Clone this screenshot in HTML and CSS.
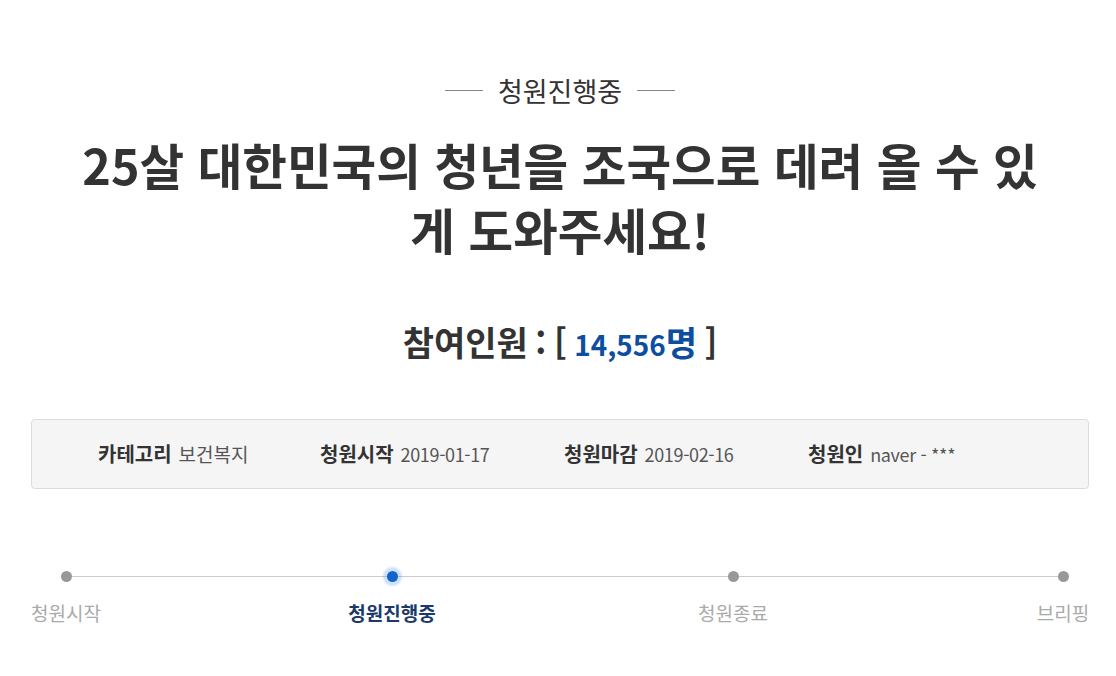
FILE: index.html
```html
<!DOCTYPE html>
<html lang="ko">
<head>
    <meta charset="UTF-8">
    <title>청원진행중</title>
    <link rel="stylesheet" href="styles.css">
</head>
<body>
<div class="wrap">
    <p class="state"><span>청원진행중</span></p>
    <h1 class="title">25살 대한민국의 청년을 조국으로 데려 올 수 있게 도와주세요!</h1>
    <p class="count">참여인원 : [ <span class="num"><em>14,556</em>명</span> ]</p>

    <ul class="info">
        <li><b>카테고리</b>보건복지</li>
        <li><b>청원시작</b><em>2019-01-17</em></li>
        <li><b>청원마감</b><em>2019-02-16</em></li>
        <li><b>청원인</b><em>naver - ***</em></li>
    </ul>

    <ol class="steps">
        <li class="first"><i></i>청원시작</li>
        <li class="gap"></li>
        <li class="on"><i></i>청원진행중</li>
        <li class="gap"></li>
        <li><i></i>청원종료</li>
        <li class="gap"></li>
        <li class="last"><i></i>브리핑</li>
    </ol>
</div>
</body>
</html>
```

FILE: styles.css
```css
*{
    margin: 0;
    padding: 0;
}
body{
    font-family: "Noto Sans CJK KR", "Noto Sans", sans-serif;
    color: #333;
    background: #fff;
}
em{
    font-style: normal;
}
.wrap{
    width: 1058px;
    margin-left: 31px;
    padding-top: 63px;
}
.state{
    text-align: center;
    font-size: 27px;
    line-height: 34px;
    color: #333;
}
.state span{
    display: inline-flex;
    align-items: center;
    gap: 15px;
}
.state span::before,
.state span::after{
    content: "";
    width: 38px;
    height: 1px;
    background: #888;
}
.title{
    width: 970px;
    margin: 24px auto 0;
    text-align: center;
    font-size: 48.5px;
    line-height: 65px;
    font-weight: bold;
    word-break: break-all;
    color: #333;
}
.count{
    margin-top: 60px;
    text-align: center;
    font-size: 34px;
    line-height: 40px;
    font-weight: bold;
    word-spacing: -2px;
    color: #333;
}
.count em{
    font-size: 0.82em;/*숫자는 조금 작게*/
}
.count .num{
    color: #0d4ea0;
}
.info{
    list-style: none;
    margin-top: 55px;
    height: 68px;
    border: 1px solid #dcdcdc;
    border-radius: 4px;
    background: #f5f5f5;
    display: grid;
    grid-template-columns: 222px 244px 244px auto;
    align-items: center;
    padding-left: 66px;
    font-size: 19px;
    color: #555;
}
.info em{
    font-size: 18px;
    letter-spacing: -0.02em;
}
.info b{
    color: #333;
    font-size: 20px;
    margin-right: 7px;
}
.steps{
    list-style: none;
    margin-top: 82px;
    display: grid;
    grid-template-columns: 70px 241px 100px 241px 100px 254px 52px;
    position: relative;
    font-size: 19px;
    color: #aaa;
}
.steps::before{
    content: "";
    position: absolute;
    left: 35px;
    right: 26px;
    top: 5px;
    height: 1px;
    background: #ccc;
}
.steps li{
    display: flex;
    flex-direction: column;
    align-items: center;
    line-height: 26px;
    white-space: nowrap;
}
.steps i{
    position: relative;
    width: 11px;
    height: 11px;
    border-radius: 50%;
    background: #999;
    margin-bottom: 18px;
}
.steps .on{
    color: #1b3a6b;
    font-weight: bold;
}
.steps .on i{
    background: #1565c9;
    box-shadow: 0 0 2px 4px rgba(60,140,240,0.25);
}
```
